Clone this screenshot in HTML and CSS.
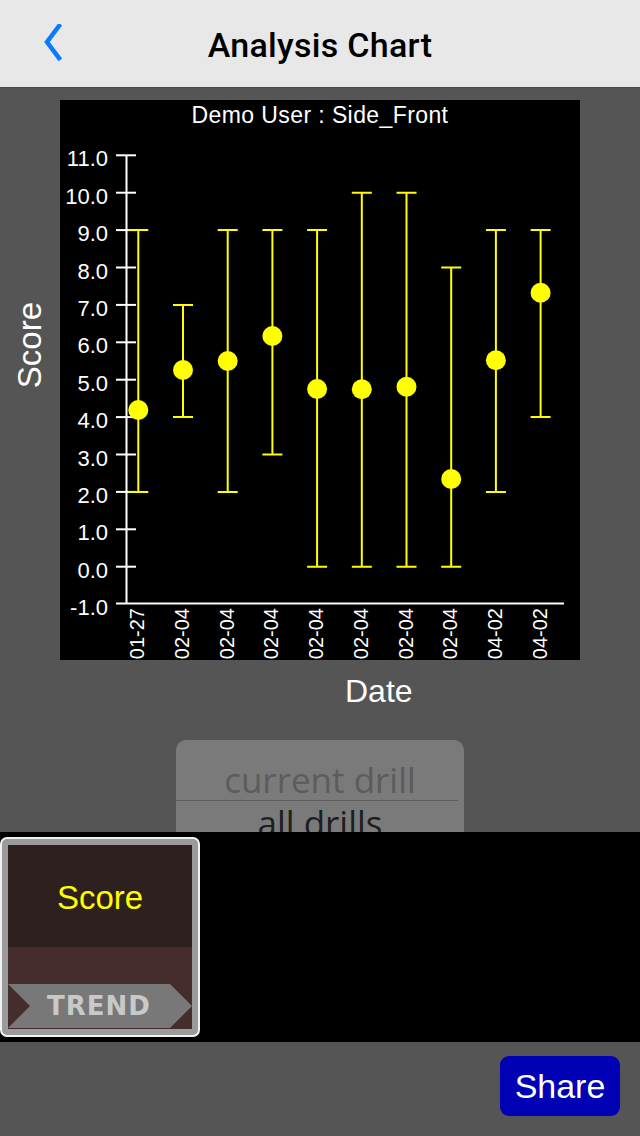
FILE: index.html
```html
<!DOCTYPE html>
<html lang="en">
<head>
<meta charset="utf-8">
<title>Analysis Chart</title>
<link rel="stylesheet" href="styles.css">
</head>
<body>
<div class="screen">
  <header class="nav">
    <svg class="back" width="24" height="40" viewBox="0 0 24 40" aria-hidden="true">
      <polyline points="17,2 5,18 17,34" fill="none" stroke="#0a7aff" stroke-width="4.5" stroke-linecap="square" stroke-linejoin="miter"/>
    </svg>
    <h1 class="nav-title">Analysis Chart</h1>
  </header>

  <main class="content">
    <div class="chart-row">
      <div class="y-title"><span>Score</span></div>
      <svg class="chart" width="520" height="560" viewBox="0 0 520 560">
        <rect x="0" y="0" width="520" height="560" fill="#000"/>
        <text class="chart-title" x="260" y="23" text-anchor="middle">Demo User : Side_Front</text>

        <g class="axis" stroke="#fff" stroke-width="2">
          <line x1="66.5" y1="55.3" x2="66.5" y2="504"/>
          <line x1="56" y1="503.5" x2="504" y2="503.5"/>
          <line x1="56" y1="55.3" x2="76" y2="55.3"/>
          <line x1="56" y1="92.7" x2="76" y2="92.7"/>
          <line x1="56" y1="130.1" x2="76" y2="130.1"/>
          <line x1="56" y1="167.5" x2="76" y2="167.5"/>
          <line x1="56" y1="204.9" x2="76" y2="204.9"/>
          <line x1="56" y1="242.3" x2="76" y2="242.3"/>
          <line x1="56" y1="279.7" x2="76" y2="279.7"/>
          <line x1="56" y1="317.1" x2="76" y2="317.1"/>
          <line x1="56" y1="354.5" x2="76" y2="354.5"/>
          <line x1="56" y1="391.9" x2="76" y2="391.9"/>
          <line x1="56" y1="429.3" x2="76" y2="429.3"/>
          <line x1="56" y1="466.7" x2="76" y2="466.7"/>
        </g>

        <g class="ticks" text-anchor="end">
          <text x="48" y="66.3">11.0</text>
          <text x="48" y="103.7">10.0</text>
          <text x="48" y="141.1">9.0</text>
          <text x="48" y="178.5">8.0</text>
          <text x="48" y="215.9">7.0</text>
          <text x="48" y="253.3">6.0</text>
          <text x="48" y="290.7">5.0</text>
          <text x="48" y="328.1">4.0</text>
          <text x="48" y="365.5">3.0</text>
          <text x="48" y="402.9">2.0</text>
          <text x="48" y="440.3">1.0</text>
          <text x="48" y="477.7">0.0</text>
          <text x="48" y="515.1">-1.0</text>
        </g>

        <g class="bars" stroke="#ffff00" stroke-width="2" fill="none">
          <path d="M78.3 391.9V130.1M68.3 391.9h20M68.3 130.1h20"/>
          <path d="M123 317.1V204.9M113 317.1h20M113 204.9h20"/>
          <path d="M167.7 391.9V130.1M157.7 391.9h20M157.7 130.1h20"/>
          <path d="M212.4 354.5V130.1M202.4 354.5h20M202.4 130.1h20"/>
          <path d="M257.1 466.7V130.1M247.1 466.7h20M247.1 130.1h20"/>
          <path d="M301.8 466.7V92.7M291.8 466.7h20M291.8 92.7h20"/>
          <path d="M346.5 466.7V92.7M336.5 466.7h20M336.5 92.7h20"/>
          <path d="M391.2 466.7V167.5M381.2 466.7h20M381.2 167.5h20"/>
          <path d="M435.9 391.9V130.1M425.9 391.9h20M425.9 130.1h20"/>
          <path d="M480.6 317.1V130.1M470.6 317.1h20M470.6 130.1h20"/>
        </g>

        <g class="points" fill="#ffff00">
          <circle cx="78.3" cy="310" r="10"/>
          <circle cx="123" cy="270" r="10"/>
          <circle cx="167.7" cy="261" r="10"/>
          <circle cx="212.4" cy="236" r="10"/>
          <circle cx="257.1" cy="289" r="10"/>
          <circle cx="301.8" cy="289.3" r="10"/>
          <circle cx="346.5" cy="286.7" r="10"/>
          <circle cx="391.2" cy="379" r="10"/>
          <circle cx="435.9" cy="260.3" r="10"/>
          <circle cx="480.6" cy="192.7" r="10"/>
        </g>

        <g class="dates" text-anchor="end">
          <text transform="translate(84.3 508) rotate(-90)">01-27</text>
          <text transform="translate(129 508) rotate(-90)">02-04</text>
          <text transform="translate(173.7 508) rotate(-90)">02-04</text>
          <text transform="translate(218.4 508) rotate(-90)">02-04</text>
          <text transform="translate(263.1 508) rotate(-90)">02-04</text>
          <text transform="translate(307.8 508) rotate(-90)">02-04</text>
          <text transform="translate(352.5 508) rotate(-90)">02-04</text>
          <text transform="translate(397.2 508) rotate(-90)">02-04</text>
          <text transform="translate(441.9 508) rotate(-90)">04-02</text>
          <text transform="translate(486.6 508) rotate(-90)">04-02</text>
        </g>
      </svg>
    </div>

    <div class="x-title">Date</div>

    <div class="picker">
      <div class="opt opt-dim">current drill</div>
      <div class="opt opt-sel">all drills</div>
    </div>
  </main>

  <section class="panel">
    <div class="tile">
      <div class="tile-top">Score</div>
      <div class="tile-bottom">
        <div class="ribbon">TREND</div>
      </div>
    </div>
  </section>

  <footer class="bar">
    <button class="share" type="button">Share</button>
  </footer>
</div>
</body>
</html>
```

FILE: styles.css
```css
* { box-sizing: border-box; }

html, body {
  margin: 0;
  padding: 0;
  background: #555555;
}

.screen {
  width: 640px;
  height: 1136px;
  overflow: hidden;
  display: flex;
  flex-direction: column;
  background: #555555;
  font-family: "Liberation Sans", Arial, sans-serif;
}

/* ---------- navigation bar ---------- */
.nav {
  position: relative;
  height: 88px;
  flex: 0 0 88px;
  background: #e8e8e8;
  border-bottom: 1px solid #474747;
  display: flex;
  align-items: center;
  justify-content: center;
}

.back {
  position: absolute;
  left: 42px;
  top: 24px;
}

.nav-title {
  margin: 0;
  font-family: Roboto, "Liberation Sans", sans-serif;
  font-weight: 500;
  font-size: 34px;
  color: #000;
  letter-spacing: 0.3px;
  padding-top: 2px;
}

/* ---------- content ---------- */
.content {
  flex: 0 0 744px;
  height: 744px;
  display: flex;
  flex-direction: column;
  overflow: hidden;
}

.chart-row {
  display: flex;
  padding-top: 12px;
}

.y-title {
  width: 60px;
  flex: 0 0 60px;
  display: flex;
  justify-content: center;
  padding-top: 202px;
}

.y-title span {
  writing-mode: vertical-rl;
  transform: rotate(180deg);
  font-size: 33px;
  line-height: 32px;
  color: #fff;
  height: max-content;
}

.chart {
  display: block;
  flex: 0 0 520px;
}

.chart-title {
  fill: #fff;
  font-family: "Liberation Sans", Arial, sans-serif;
  font-size: 23px;
  letter-spacing: 0.4px;
}

.ticks text {
  fill: #fff;
  font-family: "Liberation Sans", Arial, sans-serif;
  font-size: 22px;
}

.dates text {
  fill: #fff;
  font-family: "Liberation Sans", Arial, sans-serif;
  font-size: 20px;
}

.x-title {
  margin-top: 15px;
  padding-left: 345px;
  font-size: 32px;
  line-height: 32px;
  height: 32px;
  color: #fff;
}

.picker {
  margin-top: 33px;
  margin-left: 176px;
  width: 288px;
  height: 92px;
  background: #7a7a7a;
  border-radius: 10px 10px 0 0;
  overflow: hidden;
  font-family: "Open Sans", "Liberation Sans", sans-serif;
  text-align: center;
}

.opt {
  font-size: 35px;
}

.opt-dim {
  height: 61px;
  padding-top: 22px;
  line-height: 36px;
  color: #5c5c5c;
  border-bottom: 1px solid #5c5c5c;
  margin-right: 6px;
  padding-left: 6px;
}

.opt-sel {
  line-height: 44px;
  color: #1e1e1e;
}

/* ---------- black panel with tile ---------- */
.panel {
  flex: 0 0 210px;
  height: 210px;
  background: #000;
  padding-top: 5px;
}

.tile {
  width: 200px;
  height: 200px;
  border: 2px solid #f2f2f2;
  border-radius: 7px;
  background: #9b9b9b;
  padding: 6px;
  display: flex;
  flex-direction: column;
}

.tile-top {
  height: 102px;
  flex: 0 0 102px;
  background: #2f2020;
  color: #ffff00;
  font-size: 33px;
  display: flex;
  align-items: center;
  justify-content: center;
  padding-top: 4px;
}

.tile-bottom {
  flex: 1 1 auto;
  background: #452d2d;
  padding-top: 37px;
}

.ribbon {
  width: 184px;
  height: 44px;
  background: #787878;
  clip-path: polygon(0 0, 162px 0, 184px 50%, 162px 100%, 0 100%, 22px 50%);
  color: #c9c9c9;
  font-family: "DejaVu Sans", Verdana, sans-serif;
  font-weight: bold;
  font-size: 26px;
  line-height: 44px;
  letter-spacing: 1px;
  text-align: center;
  padding-right: 2px;
}

/* ---------- bottom bar ---------- */
.bar {
  flex: 1 1 auto;
  display: flex;
  justify-content: flex-end;
  align-items: flex-start;
  padding: 14px 20px 0 0;
}

.share {
  width: 120px;
  height: 60px;
  border: none;
  border-radius: 9px;
  background: #0000b4;
  color: #fff;
  font-family: "Liberation Sans", Arial, sans-serif;
  font-size: 34px;
  padding: 0;
  cursor: pointer;
}
```
